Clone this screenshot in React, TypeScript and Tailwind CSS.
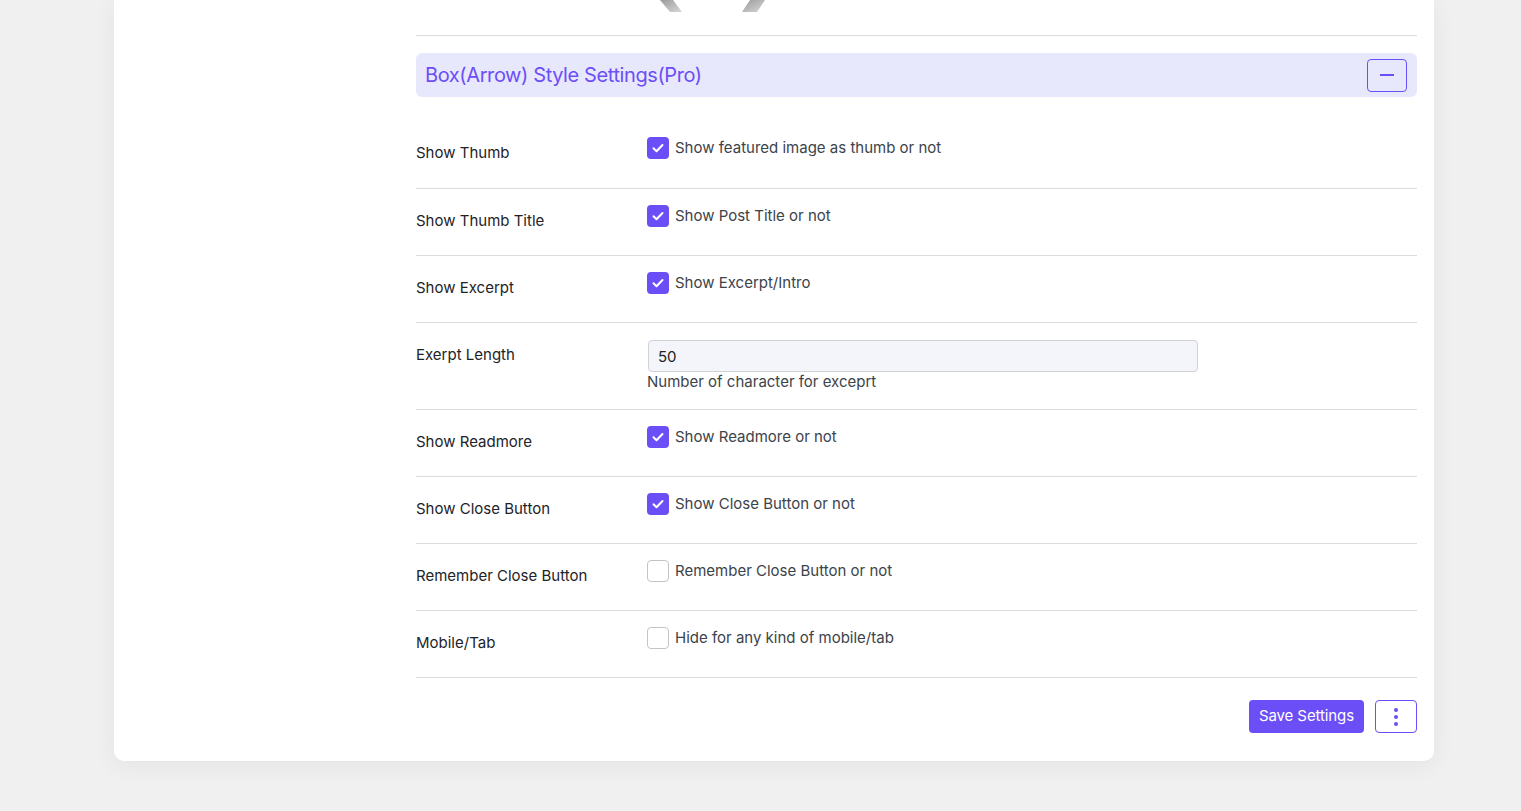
import { useState } from 'react';

// one row in the settings table
interface CheckRowProps {
  label: string;
  text: string;
  checked: boolean;
}

function Checkbox({ checked, onToggle }: { checked: boolean; onToggle: () => void }) {
  if (checked) {
    return (
      <button
        type="button"
        onClick={onToggle}
        className="w-[22px] h-[22px] rounded-[4px] bg-[#6c4ef6] flex items-center justify-center shrink-0"
      >
        <svg width="14" height="14" viewBox="0 0 14 14" fill="none">
          <path d="M2.5 7.3l3 3 6-6.3" stroke="white" strokeWidth="2" strokeLinecap="round" strokeLinejoin="round" />
        </svg>
      </button>
    );
  }
  return (
    <button
      type="button"
      onClick={onToggle}
      className="w-[22px] h-[22px] rounded-[4px] border border-[#c3c4c7] bg-white shrink-0"
    />
  );
}

function CheckRow({ label, text, checked }: CheckRowProps) {
  const [on, setOn] = useState(checked);
  return (
    <div className="flex border-b border-[#dcdcde] h-[67px]">
      <div className="w-[231px] shrink-0 pt-[21px] leading-[22px] text-[15px] text-[#1d2327]">{label}</div>
      <div className="flex items-center gap-[6px] pt-4 h-[38px] text-[15px] text-[#3c434a]">
        <Checkbox checked={on} onToggle={() => setOn(!on)} />
        <span className="leading-[22px]">{text}</span>
      </div>
    </div>
  );
}

export default function App() {
  const [length, setLength] = useState('50');

  return (
    <div
      className="min-h-[811px] bg-[#f0f0f1] pb-[50px]"
      style={{ fontFamily: 'Inter, "Noto Sans", sans-serif' }}
    >
      <div className="ml-[114px] w-[1320px] bg-white rounded-b-[10px] shadow-[0_4px_24px_rgba(0,0,0,0.06)] pl-[302px] pr-[17px] pb-[28px]">
        {/* bottom of the preview image that is scrolled away */}
        <div className="h-[36px] border-b border-[#dcdcde]">
          <svg width="1001" height="13" viewBox="0 0 1001 13" className="block">
            <defs>
              <linearGradient id="chev" x1="0" y1="0" x2="1" y2="1">
                <stop offset="0" stopColor="#9a9a9a" />
                <stop offset="1" stopColor="#d8d8d8" />
              </linearGradient>
            </defs>
            <polygon points="244,0 257,0 266,12 254,12" fill="url(#chev)" />
            <polygon points="334,0 349,0 341,12 326,12" fill="url(#chev)" />
          </svg>
        </div>

        <div className="mt-[17px] h-[44px] rounded-[6px] bg-[#e8e8fd] flex items-center justify-between pl-[9px] pr-[10px]">
          <span className="text-[20px] tracking-[-0.4px] text-[#6c4ef6]">Box(Arrow) Style Settings(Pro)</span>
          <button
            type="button"
            className="w-[40px] h-[33px] rounded-[4px] border border-[#6c4ef6] flex items-center justify-center"
          >
            <span className="block w-[14px] h-[2px] bg-[#6c4ef6]" />
          </button>
        </div>

        <div>
          <div className="flex border-b border-[#dcdcde] h-[92px] pt-[24px]">
            <div className="w-[231px] shrink-0 pt-[21px] leading-[22px] text-[15px] text-[#1d2327]">Show Thumb</div>
            <div className="flex items-center gap-[6px] pt-4 h-[38px] text-[15px] text-[#3c434a]">
              <Checkbox checked={true} onToggle={() => {}} />
              <span className="leading-[22px]">Show featured image as thumb or not</span>
            </div>
          </div>
          <CheckRow label="Show Thumb Title" text="Show Post Title or not" checked />
          <CheckRow label="Show Excerpt" text="Show Excerpt/Intro" checked />

          <div className="flex border-b border-[#dcdcde] h-[87px]">
            <div className="w-[231px] shrink-0 pt-[21px] leading-[22px] text-[15px] text-[#1d2327]">Exerpt Length</div>
            <div className="pt-[17px]">
              <input
                value={length}
                onChange={(e) => setLength(e.target.value)}
                className="ml-[1px] w-[550px] h-[32px] rounded-[4px] border border-[#d0d2d6] bg-[#f4f5fa] px-[9px] text-[15px] text-[#1d2327] outline-none"
              />
              <p className="text-[15px] leading-[20px] text-[#3c434a]">Number of character for exceprt</p>
            </div>
          </div>

          <CheckRow label="Show Readmore" text="Show Readmore or not" checked />
          <CheckRow label="Show Close Button" text="Show Close Button or not" checked />
          <CheckRow label="Remember Close Button" text="Remember Close Button or not" checked={false} />
          <CheckRow label="Mobile/Tab" text="Hide for any kind of mobile/tab" checked={false} />
        </div>

        <div className="flex justify-end gap-[11px] mt-[22px]">
          <button
            type="button"
            className="h-[33px] px-[10px] rounded-[4px] bg-[#6c4ef6] text-white text-[15px] tracking-[-0.1px]"
          >
            Save Settings
          </button>
          <button
            type="button"
            className="w-[42px] h-[33px] rounded-[4px] border border-[#6c4ef6] flex flex-col items-center justify-center gap-[3px]"
          >
            <span className="block w-[4px] h-[4px] rounded-full bg-[#6c4ef6]" />
            <span className="block w-[4px] h-[4px] rounded-full bg-[#6c4ef6]" />
            <span className="block w-[4px] h-[4px] rounded-full bg-[#6c4ef6]" />
          </button>
        </div>
      </div>
    </div>
  );
}
